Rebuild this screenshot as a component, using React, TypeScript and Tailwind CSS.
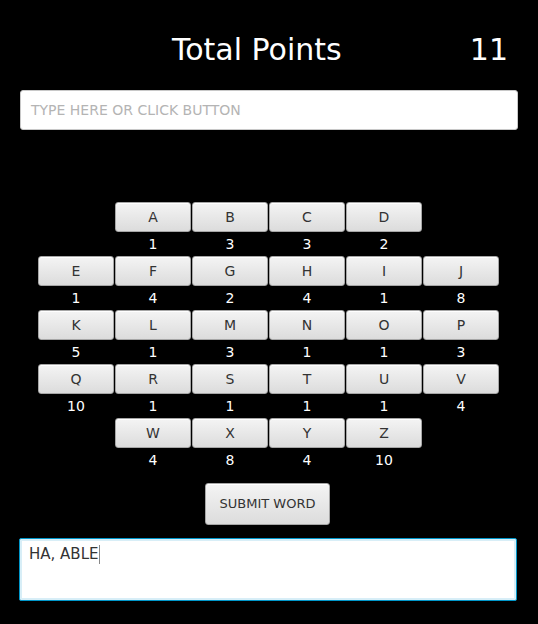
import React from 'react';

type Tile = { letter: string; points: number; col: number };

const rows: Tile[][] = [
  [
    { letter: 'A', points: 1, col: 2 },
    { letter: 'B', points: 3, col: 3 },
    { letter: 'C', points: 3, col: 4 },
    { letter: 'D', points: 2, col: 5 },
  ],
  [
    { letter: 'E', points: 1, col: 1 },
    { letter: 'F', points: 4, col: 2 },
    { letter: 'G', points: 2, col: 3 },
    { letter: 'H', points: 4, col: 4 },
    { letter: 'I', points: 1, col: 5 },
    { letter: 'J', points: 8, col: 6 },
  ],
  [
    { letter: 'K', points: 5, col: 1 },
    { letter: 'L', points: 1, col: 2 },
    { letter: 'M', points: 3, col: 3 },
    { letter: 'N', points: 1, col: 4 },
    { letter: 'O', points: 1, col: 5 },
    { letter: 'P', points: 3, col: 6 },
  ],
  [
    { letter: 'Q', points: 10, col: 1 },
    { letter: 'R', points: 1, col: 2 },
    { letter: 'S', points: 1, col: 3 },
    { letter: 'T', points: 1, col: 4 },
    { letter: 'U', points: 1, col: 5 },
    { letter: 'V', points: 4, col: 6 },
  ],
  [
    { letter: 'W', points: 4, col: 2 },
    { letter: 'X', points: 8, col: 3 },
    { letter: 'Y', points: 4, col: 4 },
    { letter: 'Z', points: 10, col: 5 },
  ],
];

const colStart: Record<number, string> = {
  1: 'col-start-1',
  2: 'col-start-2',
  3: 'col-start-3',
  4: 'col-start-4',
  5: 'col-start-5',
  6: 'col-start-6',
};

const fxButton =
  'rounded-[3px] border border-[#a6a6a6] bg-gradient-to-b from-[#f4f4f4] to-[#dcdcdc] text-[#333] shadow-[inset_0_1px_0_#ffffff]';

function LetterRow({ tiles }: { tiles: Tile[] }) {
  return (
    <div className="grid grid-cols-[repeat(6,76px)] gap-x-px">
      {tiles.map((t) => (
        <div key={t.letter} className={`${colStart[t.col]} flex flex-col`}>
          <button className={`${fxButton} h-[30px] text-[14px] leading-none`}>{t.letter}</button>
          <div className="flex h-[24px] items-center justify-center text-[14px] text-white">{t.points}</div>
        </div>
      ))}
    </div>
  );
}

export default function App() {
  return (
    <div
      className="flex h-[624px] w-[538px] flex-col bg-black"
      style={{ fontFamily: '"DejaVu Sans", "Liberation Sans", sans-serif' }}
    >
      {/* Header */}
      <div className="flex h-[90px] items-start pt-[31px] text-white">
        <div className="ml-[172px] text-[30px] leading-[38px]">Total Points</div>
        <div className="ml-auto mr-[30px] text-[30px] leading-[38px]">11</div>
      </div>

      {/* Word input */}
      <div className="mx-[20px] flex h-[40px] items-center rounded-[3px] border border-[#c8c8c8] bg-white px-[10px] text-[14px] text-[#b4b4b4]">
        TYPE HERE OR CLICK BUTTON
      </div>

      {/* Letter grid */}
      <div className="ml-[38px] mt-[72px] flex flex-col">
        {rows.map((r, i) => (
          <LetterRow key={i} tiles={r} />
        ))}
      </div>

      {/* Submit */}
      <div className="mt-[11px] flex">
        <button className={`${fxButton} ml-[205px] h-[42px] w-[125px] text-[13px]`}>SUBMIT WORD</button>
      </div>

      {/* Words list */}
      <div className="ml-[19px] mr-[21px] mt-[13px] h-[63px] rounded-[2px] border border-[#0096c9] bg-white shadow-[inset_0_0_0_2px_#d8eef7]">
        <div className="flex items-center px-[9px] pt-[5px] text-[15px] leading-[20px] text-[#333]">
          HA, ABLE
          <span className="ml-px inline-block h-[19px] w-px bg-[#888]" />
        </div>
      </div>
    </div>
  );
}
